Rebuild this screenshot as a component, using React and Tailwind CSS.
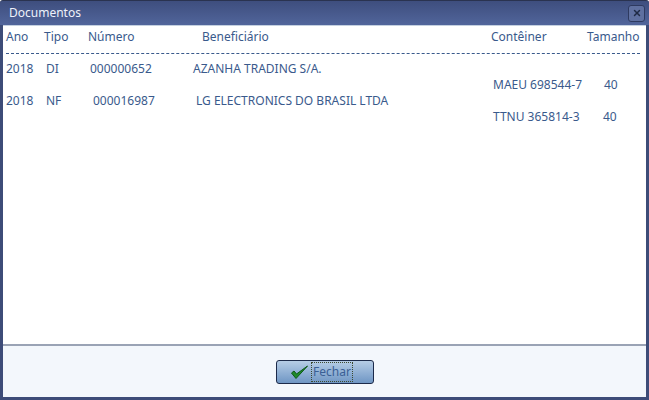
import React from "react";
import { X } from "lucide-react";

const font = "font-['Noto_Sans','Open_Sans',sans-serif]";

function Cell({ w, pl, children }) {
  return <span className="whitespace-pre shrink-0" style={{ width: w, paddingLeft: pl }}>{children}</span>;
}

function Row({ cells, className = "" }) {
  return (
    <div className={"flex h-4 leading-4 " + className}>
      {cells.map(([w, pl, t], i) => (
        <Cell key={i} w={w} pl={pl}>{t}</Cell>
      ))}
    </div>
  );
}

export default function App() {
  return (
    <div className={"w-[649px] h-[400px] flex flex-col overflow-hidden rounded-t-[3px] bg-[#3d4c78] border-t border-[#2a3350] text-[#3a5a8c] " + font}>
      <div className="h-6 shrink-0 flex items-center justify-between pl-[9px] pr-[4px] bg-gradient-to-b from-[#3e4e7e] to-[#51659b]">
        <span className="text-[12px] text-[#eef2fa] leading-none">Documentos</span>
        <span className="w-[17px] h-[17px] rounded-[3px] border border-[#2e3a60] bg-[#5f70a0] flex items-center justify-center">
          <X size={10} strokeWidth={3.5} className="text-[#1f2a44]" />
        </span>
      </div>
      <div className="flex-1 mx-[3px] mb-[3px] flex flex-col min-h-0">
        <div className="flex-1 bg-white border-t border-[#c4d0e0] border-b-2 border-b-[#9aa3b5] pt-[3px] pl-[3px] pr-[6px] text-[12px]">
          <Row cells={[[38, 0, "Ano"], [41, 0, "Tipo"], [109, 3, "Número"], [294, 8, "Beneficiário"], [99, 3, "Contêiner"], [54, 0, "Tamanho"]]} />
          <div className="h-4 flex items-center">
            <div className="w-full border-t border-dashed border-[#3a5a8c]" />
          </div>
          <Row cells={[[40, 0, "2018"], [44, 0, "DI"], [103, 0, "000000652"], [300, 0, "AZANHA TRADING S/A."]]} />
          <Row cells={[[487, 0, ""], [111, 0, "MAEU 698544-7"], [30, 0, "40"]]} />
          <Row cells={[[40, 0, "2018"], [47, 0, "NF"], [103, 0, "000016987"], [300, 0, "LG ELECTRONICS DO BRASIL LTDA"]]} />
          <Row cells={[[487, 0, ""], [110, 0, "TTNU 365814-3"], [30, 0, "40"]]} />
        </div>
        <div className="h-[51px] shrink-0 bg-[#f3f7fc] flex items-center justify-center">
          <button className="w-[98px] h-[24px] rounded-[3px] border border-[#1c2a4a] bg-gradient-to-b from-[#b6cde6] to-[#6f96c4] flex items-center justify-center text-[12px] text-[#3a5f95]">
            <svg width="20" height="16" viewBox="0 0 20 16" className="mr-[1px] -ml-[6px]">
              <path d="M1.5 9 L6 14.5 L17.5 2 L6.5 10 L4 7 Z" fill="#1f8a2a" stroke="#0d5a18" strokeWidth="1" strokeLinejoin="round" />
            </svg>
            <span className="border border-dotted border-[#3d4a30] px-[1px] h-[20px] leading-[18px]">Fechar</span>
          </button>
        </div>
      </div>
    </div>
  );
}
